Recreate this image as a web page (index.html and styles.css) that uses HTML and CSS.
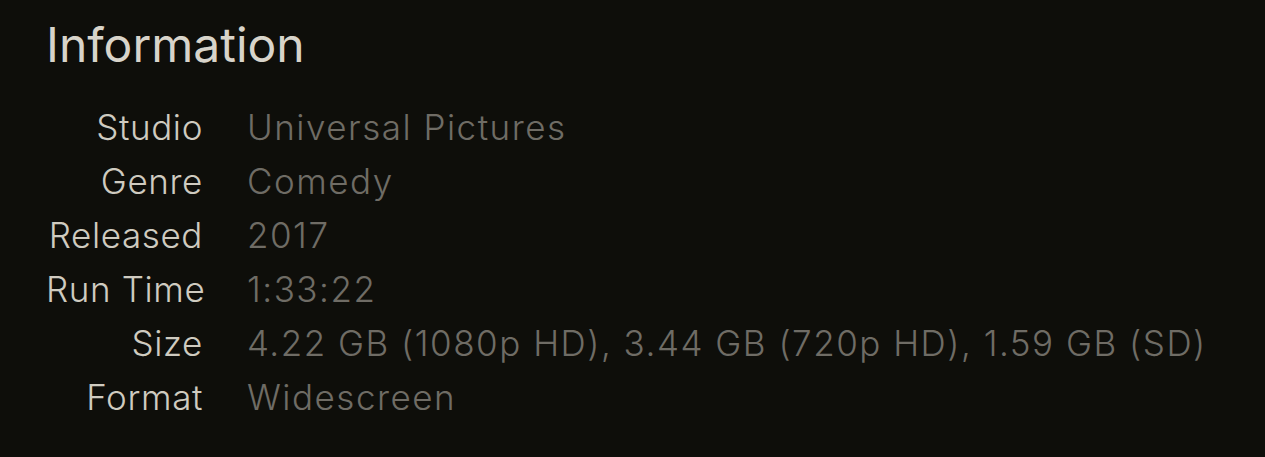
FILE: index.html
```html
<!DOCTYPE html>
<html lang="en">
<head>
  <meta charset="UTF-8" />
  <title>Information</title>
  <link rel="stylesheet" href="styles.css">
</head>
<body>
  <section class="info">
    <h1>Information</h1>
    <dl class="details">
      <dt>Studio</dt><dd>Universal Pictures</dd>
      <dt>Genre</dt><dd>Comedy</dd>
      <dt>Released</dt><dd>2017</dd>
      <dt>Run Time</dt><dd>1:33:22</dd>
      <dt>Size</dt><dd>4.22 GB (1080p HD), 3.44 GB (720p HD), 1.59 GB (SD)</dd>
      <dt>Format</dt><dd>Widescreen</dd>
    </dl>
  </section>
</body>
</html>
```

FILE: styles.css
```css
html, body {
  margin: 0;
  background: #0e0e0a;
}
body {
  font-family: Inter, "Noto Sans", sans-serif;
}
.info {
  padding: 14px 0 0 46px;
}
h1 {
  margin: 0;
  font-size: 48px;
  font-weight: 400;
  color: #d8d4ca;
  line-height: 62px;
}
.details {
  display: grid;
  grid-template-columns: 157px auto;
  column-gap: 44px;
  margin: 24px 0 0;
  font-size: 35px;
  font-weight: 300;
  line-height: 54px;
}
.details dt {
  text-align: right;
  white-space: nowrap;
  color: #cfcbc0;
  letter-spacing: 0.6px;
}
.details dd {
  margin: 0;
  white-space: nowrap;
  color: #6f6c65;
  letter-spacing: 1.5px;
}
```
